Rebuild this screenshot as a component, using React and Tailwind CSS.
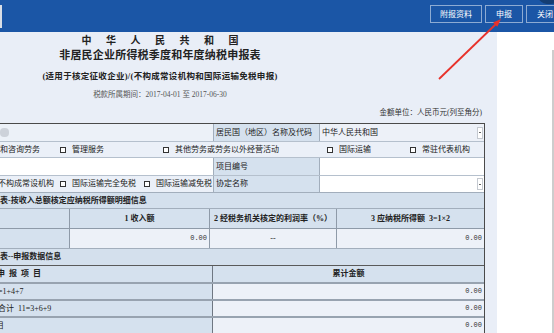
import React from 'react';

function Box() {
  return <span className="mr-[6px] inline-block h-[6px] w-[6px] shrink-0 border border-[#333] bg-white" />;
}

function Drop() {
  return (
    <span className="ml-auto flex h-[12px] w-[6px] items-center justify-center border border-[#c4c9d0] bg-white">
      <span className="h-[1px] w-[2px] bg-[#666]" />
    </span>
  );
}

function Label({ children }) {
  return (
    <div className="flex w-[107px] items-center border-l border-r border-[#a2aebc] bg-[#d5e1ee] pl-[2px]">
      {children}
    </div>
  );
}

function Num({ children }) {
  return <span className="font-['Liberation_Mono',monospace] text-[7px] text-[#333]">{children}</span>;
}

function App() {
  return (
    <div className="relative h-[333px] w-[554px] overflow-hidden bg-white font-['Liberation_Serif','Noto_Sans_CJK_SC',serif] text-[#222]">
      {/* top bar */}
      <div className="flex h-[32px] items-start overflow-hidden bg-[#1b56a6]">
        <div className="mt-[5px] h-[23px] w-[2px] bg-[#d9dee6]" />
        <div className="ml-auto mr-[-10px] mt-[5px] flex gap-[3px] font-['Noto_Sans_CJK_SC',sans-serif] text-[8px] text-white">
          <div className="flex h-[18px] w-[52px] items-center justify-center border border-white/50">附报资料</div>
          <div className="flex h-[18px] w-[38px] items-center justify-center border border-white/50">申报</div>
          <div className="flex h-[18px] w-[38px] items-center justify-center border border-white/50">关闭</div>
        </div>
      </div>

      <div className="flex h-[301px]">
        <div className="w-[497px] bg-[#e9eef7]">
          {/* titles */}
          <div className="w-[320px] text-center font-bold">
            <div className="flex h-[16px] items-center justify-center pl-[6px] text-[10px] tracking-[6px]">中 华 人 民 共 和 国</div>
            <div className="flex h-[14px] items-center justify-center text-[11px] tracking-[0.2px]">非居民企业所得税季度和年度纳税申报表</div>
            <div className="mt-[8px] flex h-[12px] items-center justify-center text-[8.5px] tracking-[0.3px]">(适用于核定征收企业)/(不构成常设机构和国际运输免税申报)</div>
            <div className="mt-[7px] flex h-[12px] items-center justify-center text-[7.5px] font-normal text-[#555]">税款所属期间：2017-04-01 至 2017-06-30</div>
          </div>
          <div className="mt-[6px] flex h-[12px] w-[482px] items-center justify-end text-[7.5px] text-[#333]">金额单位：人民币元(列至角分)</div>

          {/* form table */}
          <div className="mt-[4px] w-[485px] border-r border-t border-[#4a4a4a] text-[8px] leading-none">
            <div className="flex h-[18px] border-b border-[#b5c0cd]">
              <div className="flex w-[213px] items-center bg-[#ecf1f8]">
                <span className="h-[9px] w-[9px] rounded-sm bg-[#cdd2da] blur-[0.5px]" />
              </div>
              <Label>居民国（地区）名称及代码</Label>
              <div className="flex flex-1 items-center bg-[#edf1f8] pl-[2px] pr-[1px]">
                中华人民共和国
                <Drop />
              </div>
            </div>

            <div className="flex h-[16px] items-center border-b border-[#b5c0cd] bg-[#ebf0f8]">
              <div className="w-[60px]">和咨询劳务</div>
              <div className="flex w-[103px] items-center"><Box />管理服务</div>
              <div className="flex w-[164px] items-center"><Box />其他劳务或劳务以外经营活动</div>
              <div className="flex w-[83px] items-center"><Box />国际运输</div>
              <div className="flex items-center"><Box />常驻代表机构</div>
            </div>

            <div className="flex h-[18px] border-b border-[#b5c0cd]">
              <div className="w-[213px] bg-white" />
              <Label>项目编号</Label>
              <div className="flex-1 bg-white" />
            </div>

            <div className="flex h-[17px] border-b border-[#a2aebc]">
              <div className="flex w-[213px] items-center bg-[#ebf0f8]">
                <div className="ml-[-2px] w-[62px]">不构成常设机构</div>
                <div className="flex w-[84px] items-center"><Box />国际运输完全免税</div>
                <div className="flex items-center"><Box />国际运输减免税</div>
              </div>
              <Label>协定名称</Label>
              <div className="flex flex-1 items-center bg-white pr-[1px]">
                <Drop />
              </div>
            </div>

            <div className="flex h-[16px] items-center border-b border-[#a2aebc] bg-[#d4e0ed] font-bold">
              表-按收入总额核定应纳税所得额明细信息
            </div>

            <div className="flex h-[20px] border-b border-[#8e9aa8] bg-[#d5e1ee] font-bold">
              <div className="w-[70px] border-r border-[#8e9aa8]" />
              <div className="flex w-[140px] items-center justify-center border-r border-[#8e9aa8]">1 收入额</div>
              <div className="flex w-[127px] items-center justify-center border-r border-[#8e9aa8] whitespace-nowrap">2 经税务机关核定的利润率（%）</div>
              <div className="flex flex-1 items-center justify-center">3 应纳税所得额&nbsp;&nbsp;3=1×2</div>
            </div>

            <div className="flex h-[20px] border-b border-[#a2aebc]">
              <div className="w-[70px] border-r border-[#8e9aa8] bg-[#d5e1ee]" />
              <div className="flex w-[140px] items-center justify-end border-r border-[#8e9aa8] bg-[#edf1f8] pr-[2px]"><Num>0.00</Num></div>
              <div className="flex w-[127px] items-center justify-center border-r border-[#8e9aa8] bg-[#edf1f8]">--</div>
              <div className="flex flex-1 items-center justify-end bg-[#edf1f8] pr-[2px]"><Num>0.00</Num></div>
            </div>

            <div className="flex h-[17px] items-center border-b border-[#5a5a5a] bg-[#d4e0ed] font-bold">
              表--申报数据信息
            </div>

            <div className="flex h-[18px] border-b-2 border-[#98a3b0] bg-[#d5e1ee] font-bold">
              <div className="flex w-[213px] items-center border-r border-[#6f7782]">
                <span className="ml-[-3px] tracking-[1px]">申 报 项 目</span>
              </div>
              <div className="flex flex-1 items-center justify-center">累计金额</div>
            </div>

            {[
              ['=1+4+7', 'ml-[-2px]'],
              ['合计  11=3+6+9', 'ml-[-2px]'],
              ['目', 'ml-[-4px]'],
            ].map(([label, off], i) => (
              <div key={i} className="flex h-[17px] border-b-2 border-[#98a3b0]">
                <div className="flex w-[213px] items-center border-r border-[#6f7782] bg-[#d5e1ee]">
                  <span className={`${off} whitespace-pre`}>{label}</span>
                </div>
                <div className="flex flex-1 items-center justify-end bg-[#edf1f8] pr-[2px]"><Num>0.00</Num></div>
              </div>
            ))}
          </div>
        </div>

        <div className="flex flex-1 justify-end bg-white">
          <div className="mt-[18px] h-full w-[2px] bg-[#cdcdcd]" />
        </div>
      </div>

      {/* pointer overlay */}
      <div className="absolute right-[-6px] top-[-14px] h-[18px] w-[22px] rounded-full bg-[#143d73]" />
      <svg className="pointer-events-none absolute left-0 top-0" width="554" height="333">
        <line x1="439" y1="79" x2="496" y2="24" stroke="#e8322b" strokeWidth="1.8" />
        <polygon points="501,19 497.3,26.8 493.1,22.4" fill="#e8322b" />
      </svg>
    </div>
  );
}

export default App;
